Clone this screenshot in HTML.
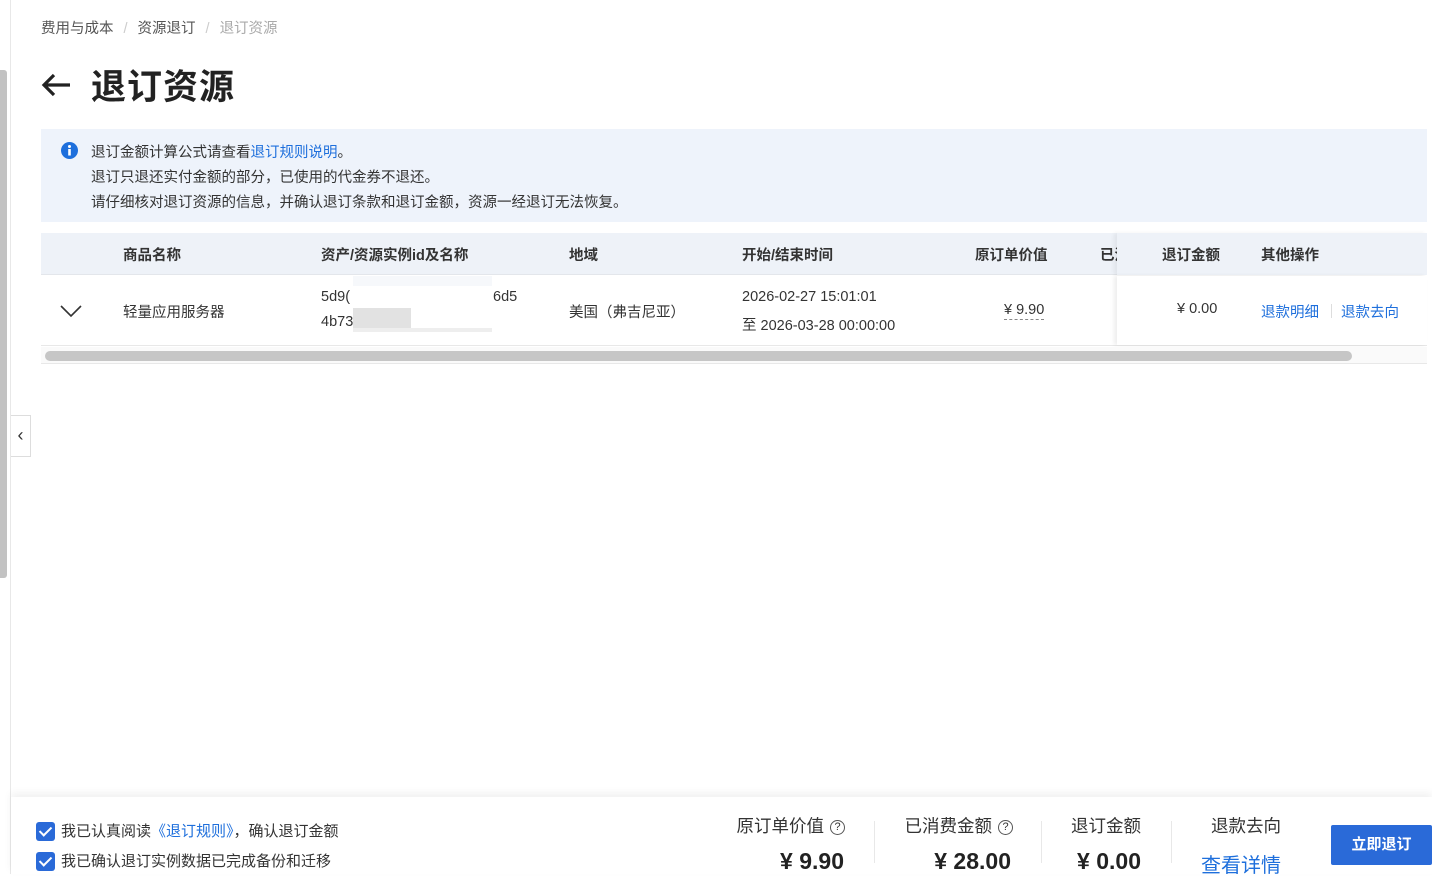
<!DOCTYPE html>
<html><head><meta charset="utf-8"><style>
*{box-sizing:border-box;margin:0;padding:0}
body{width:1432px;height:874px;overflow:hidden;background:#fff;font-family:"Liberation Sans","Noto Sans CJK SC",sans-serif;color:#333;position:relative}
.abs{position:absolute}
.sb{left:0;top:70px;width:7px;height:508px;background:#c2c2c2;border-radius:0 3px 3px 0}
.vl{left:10px;top:0;width:1px;height:874px;background:#e8e8e8}
.bc{left:41px;top:17px;font-size:14.5px;color:#555}
.bc span.s{color:#ccc;margin:0 10px}
.title{left:91px;top:59px;font-size:35px;font-weight:bold;color:#222;letter-spacing:1px}
.alert{left:41px;top:129px;width:1386px;height:93px;background:#eef3fb}
.alert p{position:absolute;left:50px;font-size:14.5px;color:#333}
.th{left:41px;top:233px;width:1386px;height:42px;background:#eef2f8;border-bottom:1px solid #e3e6eb}
.th div,.tr div{position:absolute;font-size:14.5px;white-space:nowrap}
.th div{top:11px;font-weight:bold;color:#333}
.tr{left:41px;top:276px;width:1386px;height:70px;background:#fff;border-bottom:1px solid #e8e8e8}
.blue{color:#1e6fdc !important}
.foot{left:11px;top:797px;width:1421px;height:77px;background:#fff;box-shadow:0 -4px 8px rgba(0,0,0,.06)}
.cb{position:absolute;width:19px;height:19px;background:#2a6ad8;border-radius:3px}
.cb::after{content:"";position:absolute;left:6px;top:2px;width:5px;height:10px;border:solid #fff;border-width:0 2px 2px 0;transform:rotate(45deg)}
.fl{position:absolute;font-size:17.5px;color:#333;text-align:right;white-space:nowrap}
.fv{position:absolute;font-size:23px;font-weight:bold;color:#222;text-align:right;white-space:nowrap}
.q{display:inline-block;width:15px;height:15px;border:1px solid #555;border-radius:50%;font-size:11px;text-align:center;line-height:13px;margin-left:6px;vertical-align:2px}
.dv{position:absolute;top:24px;width:1px;height:42px;background:#e8e8e8}
</style></head><body>
<div class="abs sb"></div>
<div class="abs vl"></div>
<div class="abs" style="left:11px;top:415px;width:20px;height:42px;border:1px solid #ddd;border-left:none;background:#fff;font-size:18px;text-align:center;line-height:38px;color:#333">‹</div>
<div class="abs bc">费用与成本<span class="s">/</span>资源退订<span class="s">/</span><span style="color:#aaa">退订资源</span></div>
<svg class="abs" style="left:40px;top:72px" width="32" height="26" viewBox="0 0 32 26"><path d="M30 13H4M14 3L4 13l10 10" stroke="#222" stroke-width="3.2" fill="none"/></svg>
<div class="abs title">退订资源</div>
<div class="abs alert">
<svg style="position:absolute;left:20px;top:13px" width="17" height="17"><circle cx="8.5" cy="8.5" r="8.5" fill="#1e6fdc"/><rect x="7.2" y="7" width="2.6" height="6.5" fill="#fff"/><circle cx="8.5" cy="4.5" r="1.5" fill="#fff"/></svg>
<p style="top:12px">退订金额计算公式请查看<span class="blue">退订规则说明</span>。</p>
<p style="top:37px">退订只退还实付金额的部分，已使用的代金券不退还。</p>
<p style="top:62px">请仔细核对退订资源的信息，并确认退订条款和退订金额，资源一经退订无法恢复。</p>
</div>
<div class="abs th">
<div style="left:82px">商品名称</div><div style="left:280px">资产/资源实例id及名称</div><div style="left:528px">地域</div><div style="left:701px">开始/结束时间</div><div style="left:934px">原订单价值</div><div style="left:1059px">已消</div>
<div style="left:1076px;top:0;width:310px;height:42px;background:#eef2f8;box-shadow:-3px 0 4px rgba(0,0,0,.06)"></div>
<div style="left:1121px">退订金额</div><div style="left:1220px">其他操作</div>
</div>
<div class="abs tr">
<svg style="position:absolute;left:19px;top:28px" width="22" height="14"><path d="M1 2l10 10L21 2" stroke="#333" stroke-width="1.6" fill="none"/></svg>
<div style="left:82px;top:25px">轻量应用服务器</div>
<div style="left:280px;top:13px">5d9(</div><div style="left:452px;top:13px">6d5</div>
<div style="left:280px;top:38px">4b73</div>
<div style="left:312px;top:0;width:139px;height:10px;background:#f6f8fb"></div>
<div style="left:312px;top:32px;width:58px;height:20px;background:#e2e2e2"></div>
<div style="left:312px;top:52px;width:139px;height:4px;background:#eee"></div>
<div style="left:528px;top:25px">美国（弗吉尼亚）</div>
<div style="left:701px;top:13px">2026-02-27 15:01:01</div>
<div style="left:701px;top:38px">至 2026-03-28 00:00:00</div>
<div style="left:963px;top:26px;border-bottom:1px dashed #888;line-height:17px">¥ 9.90</div>
<div style="left:1076px;top:0;width:310px;height:69px;background:#fff;box-shadow:-3px 0 4px rgba(0,0,0,.07)"></div>
<div style="left:1136px;top:25px">¥ 0.00</div>
<div style="left:1220px;top:25px" class="blue">退款明细</div>
<div style="left:1290px;top:28px;width:1px;height:14px;background:#ddd"></div>
<div style="left:1300px;top:25px" class="blue">退款去向</div>
</div>
<div class="abs" style="left:41px;top:347px;width:1386px;height:17px;background:#fafafa;border-bottom:1px solid #e8e8e8"></div>
<div class="abs" style="left:45px;top:351px;width:1307px;height:10px;background:#c6c6c6;border-radius:5px"></div>
<div class="abs foot">
<div class="cb" style="left:25px;top:25px"></div>
<div style="position:absolute;left:50px;top:23px;font-size:15px">我已认真阅读<span class="blue">《退订规则》</span>，确认退订金额</div>
<div class="cb" style="left:25px;top:55px"></div>
<div style="position:absolute;left:50px;top:53px;font-size:15px">我已确认退订实例数据已完成备份和迁移</div>
<div class="fl" style="right:587px;top:16px">原订单价值<span class="q">?</span></div>
<div class="fv" style="right:588px;top:51px">¥ 9.90</div>
<div class="dv" style="left:863px"></div>
<div class="fl" style="right:419px;top:16px">已消费金额<span class="q">?</span></div>
<div class="fv" style="right:421px;top:51px">¥ 28.00</div>
<div class="dv" style="left:1030px"></div>
<div class="fl" style="right:291px;top:16px">退订金额</div>
<div class="fv" style="right:291px;top:51px">¥ 0.00</div>
<div class="dv" style="left:1160px"></div>
<div class="fl" style="right:151px;top:16px">退款去向</div>
<div class="fl blue" style="right:151px;top:52px;font-size:20px">查看详情</div>
<div style="position:absolute;left:1320px;top:28px;width:101px;height:40px;background:#2a6ad8;color:#fff;font-size:15px;font-weight:bold;text-align:center;line-height:40px;border-radius:2px">立即退订</div>
</div>
</body></html>
